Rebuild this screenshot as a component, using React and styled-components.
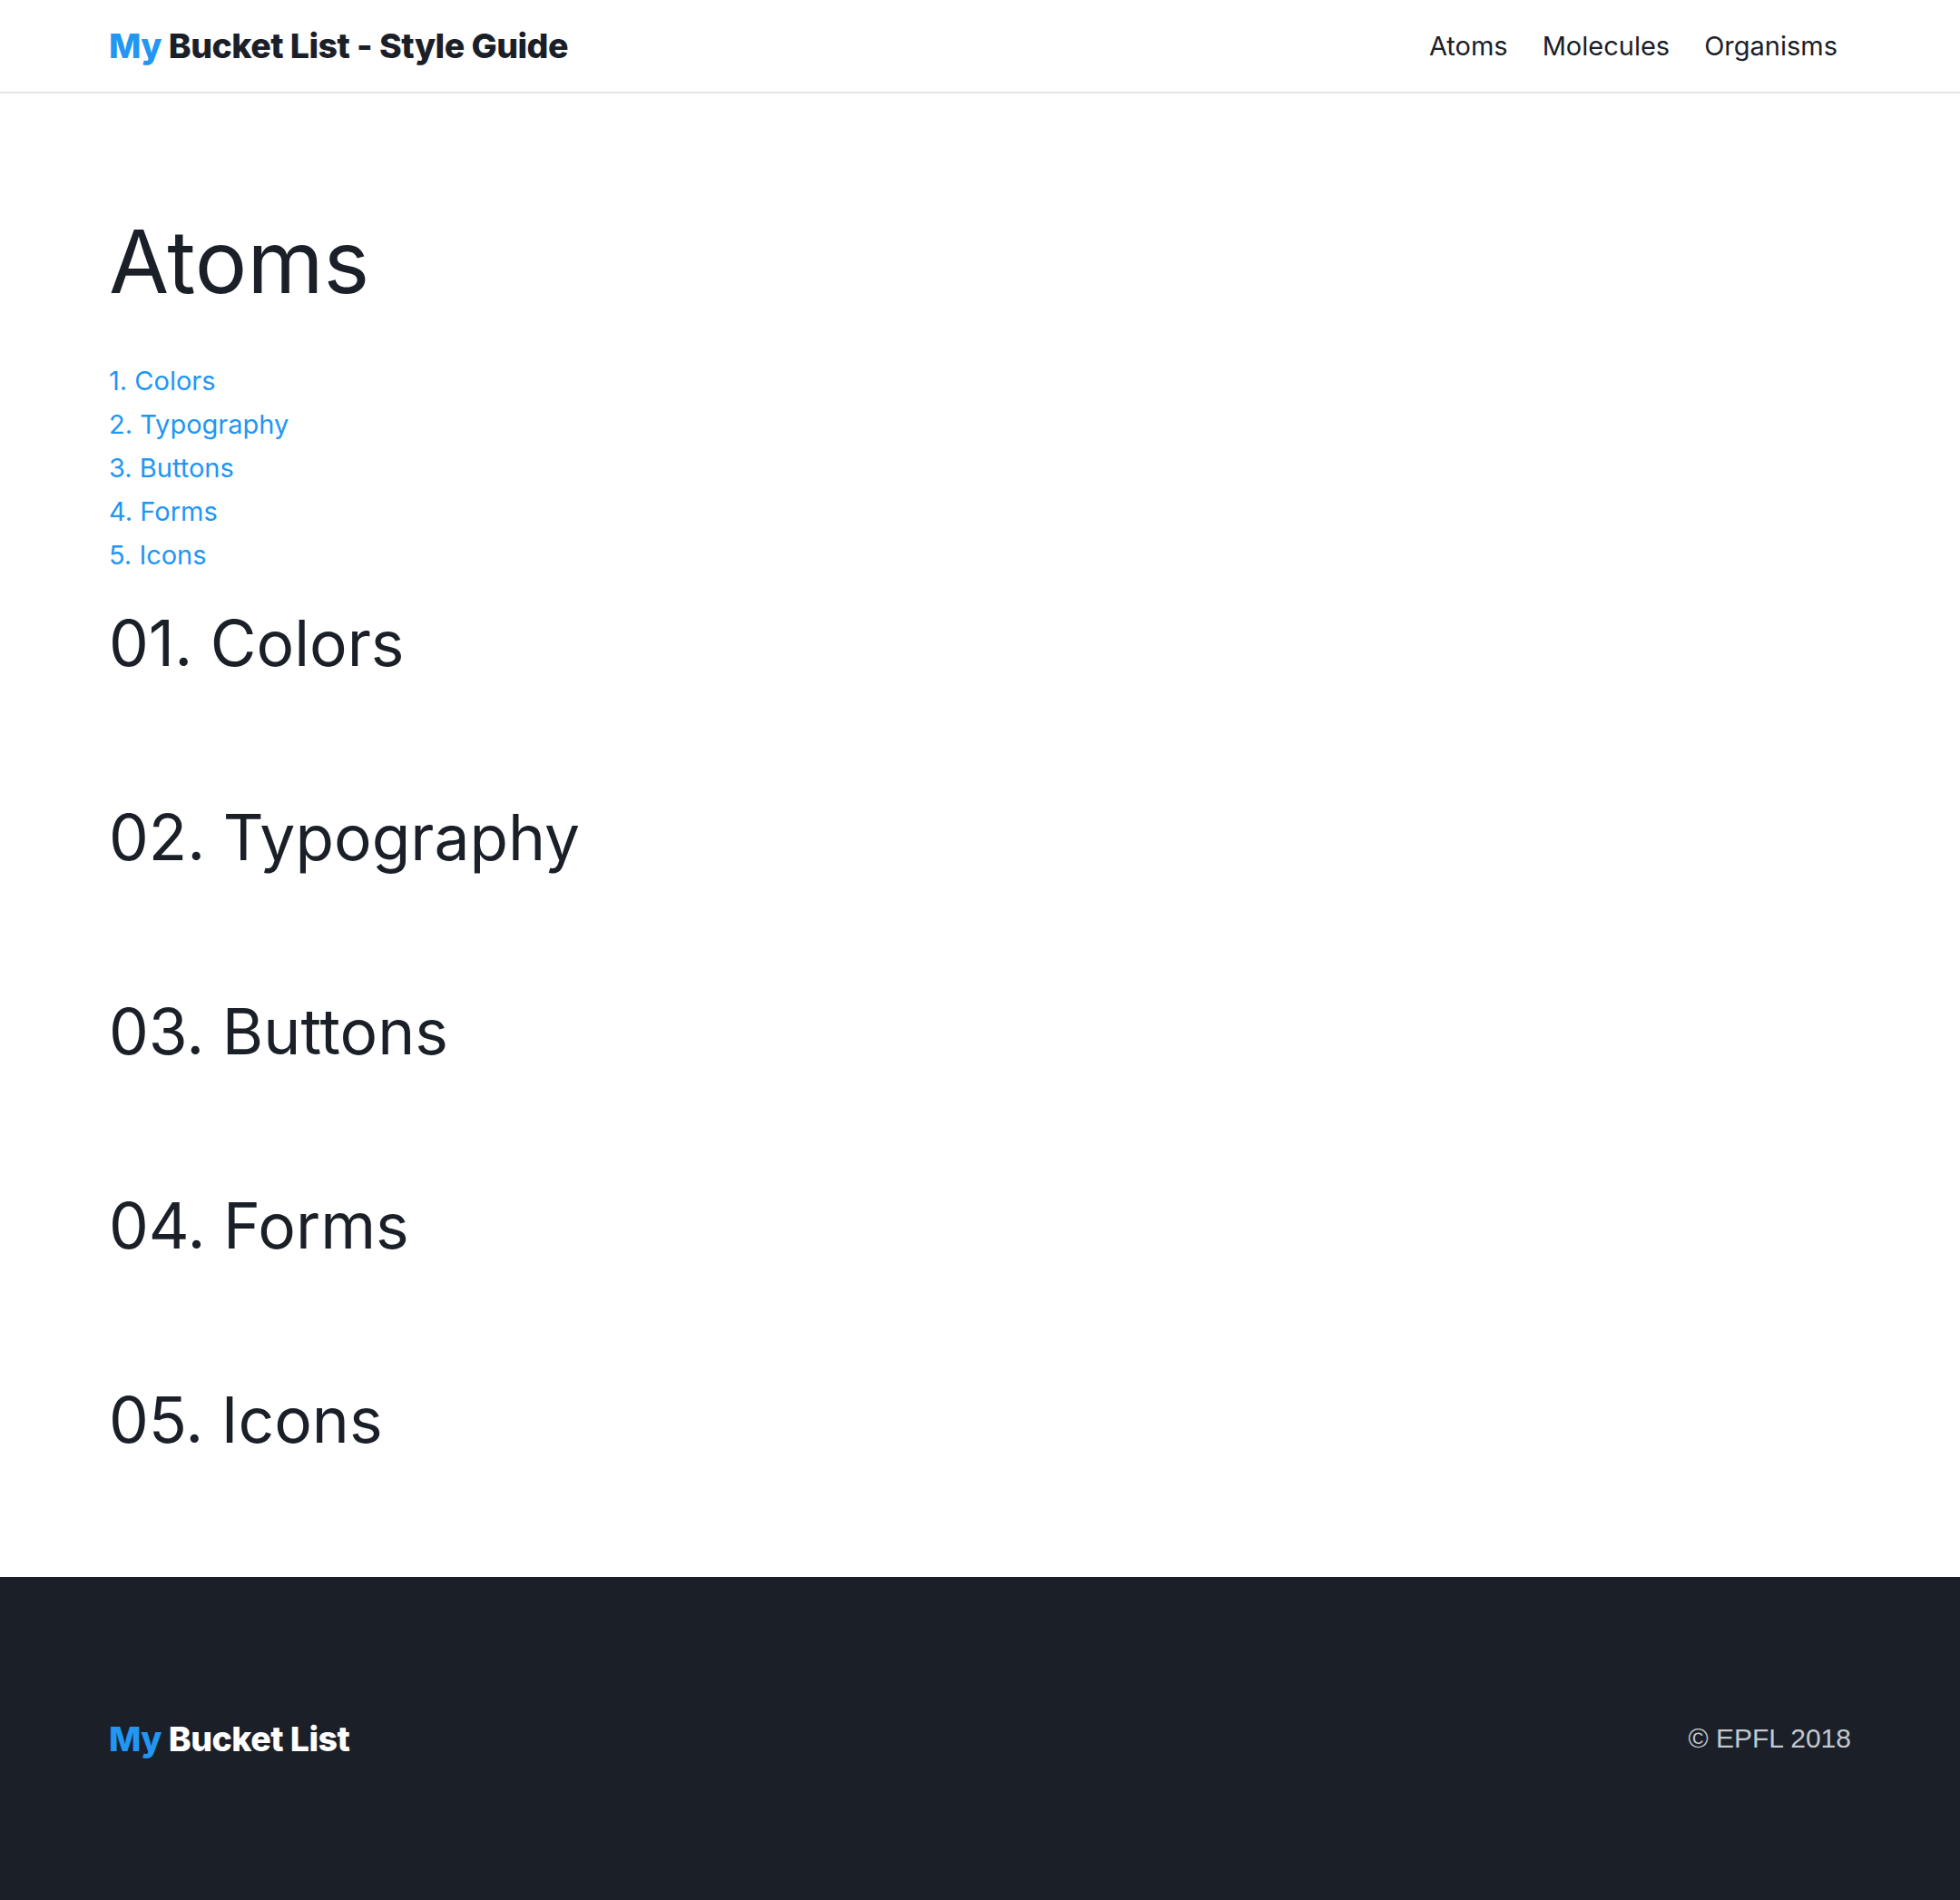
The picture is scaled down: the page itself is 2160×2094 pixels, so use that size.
import React from 'react';
import styled, { createGlobalStyle } from 'styled-components';

const GlobalStyle = createGlobalStyle`
  html, body {
    margin: 0;
    padding: 0;
    background: #fff;
  }
  body {
    font-family: Inter, "Noto Sans", sans-serif;
    color: #1b2028;
  }
  * {
    box-sizing: border-box;
  }
`;

const Container = styled.div`
  width: 1920px;
  margin: 0 auto;
`;

const Header = styled.header`
  height: 103px;
  border-bottom: 2px solid #e6e6e8;
`;

const HeaderInner = styled(Container)`
  height: 100%;
  display: flex;
  align-items: center;
  justify-content: space-between;
`;

const Brand = styled.a`
  font-size: 37.5px;
  font-weight: 800;
  letter-spacing: -0.5px;
  color: ${(p) => (p.$light ? '#ffffff' : '#1b2028')};
  text-decoration: none;
  white-space: nowrap;
`;

const BrandAccent = styled.span`
  color: #2196f3;
`;

const Nav = styled.nav`
  display: flex;
  margin-right: -4px;
`;

const NavLink = styled.a`
  font-size: 29px;
  color: #1b2028;
  text-decoration: none;
  padding: 0 19px;
`;

const Main = styled(Container)`
  padding-top: 128px;
  padding-bottom: 125px;
`;

const PageTitle = styled.h1`
  margin: 0 0 50px;
  font-size: 96px;
  font-weight: 400;
  line-height: 1.2;
`;

const Toc = styled.ol`
  list-style: none;
  margin: 0 0 25px;
  padding: 0;
`;

const TocItem = styled.li`
  font-size: 29px;
  line-height: 48px;
`;

const TocLink = styled.a`
  color: #2196f3;
  text-decoration: none;
`;

const Section = styled.section`
  padding-bottom: 118px;

  &:last-child {
    padding-bottom: 0;
  }
`;

const SectionTitle = styled.h2`
  margin: 0;
  font-size: 69.5px;
  font-weight: 400;
  line-height: 96px;
`;

const Footer = styled.footer`
  background: #1b2028;
  height: 356px;
`;

const FooterInner = styled(Container)`
  height: 100%;
  display: flex;
  align-items: center;
  justify-content: space-between;
`;

const Copyright = styled.span`
  font-family: "Liberation Sans", Arial, sans-serif;
  font-size: 30px;
  color: #c3c8ce;
`;

const sections = ['Colors', 'Typography', 'Buttons', 'Forms', 'Icons'];

export default function App() {
  return (
    <>
      <GlobalStyle />
      <Header>
        <HeaderInner>
          <Brand href="#">
            <BrandAccent>My</BrandAccent> Bucket List - Style Guide
          </Brand>
          <Nav>
            <NavLink href="#">Atoms</NavLink>
            <NavLink href="#">Molecules</NavLink>
            <NavLink href="#">Organisms</NavLink>
          </Nav>
        </HeaderInner>
      </Header>
      <Main>
        <PageTitle>Atoms</PageTitle>
        <Toc>
          {sections.map((name, i) => (
            <TocItem key={name}>
              <TocLink href={`#${name.toLowerCase()}`}>
                {i + 1}. {name}
              </TocLink>
            </TocItem>
          ))}
        </Toc>
        {sections.map((name, i) => (
          <Section key={name} id={name.toLowerCase()}>
            <SectionTitle>0{i + 1}. {name}</SectionTitle>
          </Section>
        ))}
      </Main>
      <Footer>
        <FooterInner>
          <Brand href="#" $light>
            <BrandAccent>My</BrandAccent> Bucket List
          </Brand>
          <Copyright>© EPFL 2018</Copyright>
        </FooterInner>
      </Footer>
    </>
  );
}
